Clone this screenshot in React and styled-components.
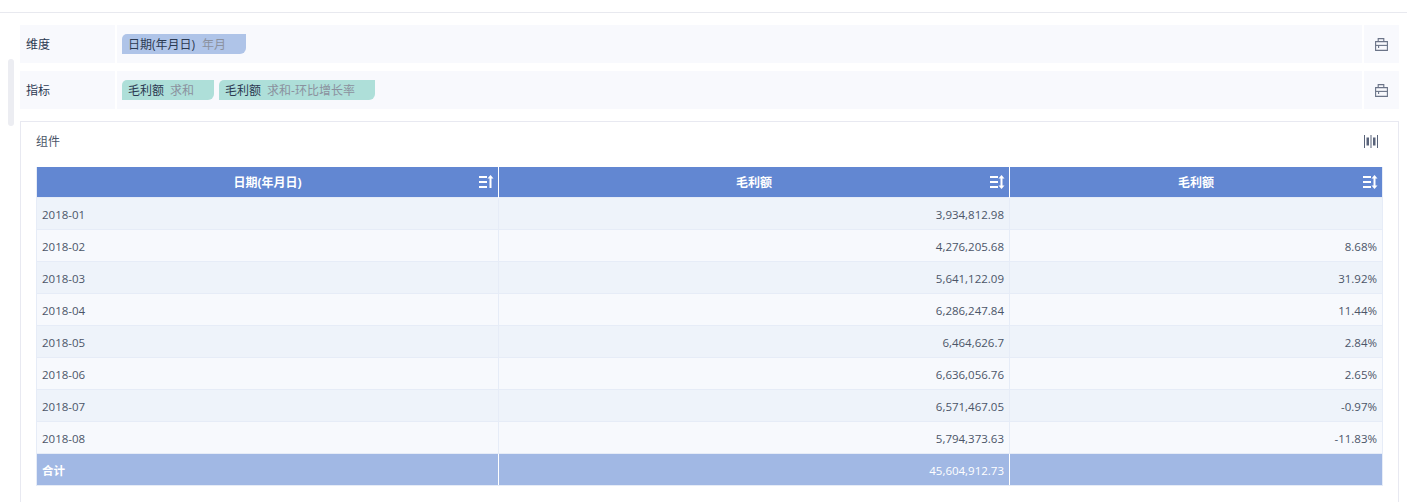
import React from 'react'
import styled, { createGlobalStyle } from 'styled-components'

const GlobalStyle = createGlobalStyle`
  html, body {
    margin: 0;
    height: 100%;
    overflow: hidden;
    background: #fff;
    font-family: "Open Sans", "Noto Sans CJK SC", sans-serif;
    font-size: 12px;
  }
`

const TopBar = styled.div`
  height: 12px;
  border-bottom: 1px solid #e8e9ef;
`
const Content = styled.div`
  padding: 12px 8px 0 20px;
`
const ScrollThumb = styled.div`
  position: absolute;
  left: 8px;
  top: 59px;
  width: 6px;
  height: 67px;
  border-radius: 3px;
  background: #ecedf2;
`
const FieldRow = styled.div`
  display: grid;
  grid-template-columns: 95px 1fr 35px;
  column-gap: 2px;
  height: 38px;
  margin-bottom: 8px;
`
const FieldLabel = styled.div`
  display: flex;
  align-items: center;
  padding-left: 6px;
  background: #f8f9fd;
  color: #2c3a52;
`
const FieldBody = styled.div`
  display: flex;
  align-items: center;
  gap: 5px;
  padding-left: 5px;
  background: #f8f9fd;
`
const FieldTool = styled.div`
  display: flex;
  align-items: center;
  justify-content: center;
  background: #f8f9fd;
`
const Chip = styled.div`
  display: flex;
  align-items: center;
  gap: ${p => p.$gap || 6}px;
  height: 20px;
  padding-left: 6px;
  width: ${p => p.$width}px;
  box-sizing: border-box;
  white-space: nowrap;
  border-radius: 5px 0 6px 0;
  background: ${p => p.$color};
  color: #2c3a52;
`
const ChipSub = styled.span`
  color: #8b919e;
`
const Panel = styled.div`
  margin-top: 12px;
  height: 400px;
  box-sizing: border-box;
  border: 1px solid #e8e9f1;
  padding: 0 15px;
`
const PanelHead = styled.div`
  display: flex;
  align-items: center;
  justify-content: space-between;
  height: 38px;
  margin-bottom: 7px;
  color: #4b5568;
  padding-right: 5px;
`
const Table = styled.div`
  border: 1px solid #e6ecf7;
  border-top: 0;
`
const Row = styled.div`
  display: grid;
  grid-template-columns: 462px 511px 1fr;
  height: ${p => p.$height}px;
  box-sizing: border-box;
  background: ${p => p.$bg};
  border-bottom: ${p => (p.$line ? '1px solid #e6ecf7' : '0')};
`
const Cell = styled.div`
  display: flex;
  align-items: center;
  justify-content: ${p => (p.$right ? 'flex-end' : 'flex-start')};
  padding: 1px 5px 0;
  color: #4b5568;
  font-size: 11.5px;
  border-right: 1px solid #e6ecf7;
  &:last-child {
    border-right: 0;
  }
`
const HeadCell = styled.div`
  position: relative;
  display: flex;
  align-items: center;
  justify-content: center;
  padding-bottom: 2px;
  font-weight: 700;
  color: #fff;
  border-right: 1px solid #fff;
  &:last-child {
    border-right: 0;
  }
`
const HeadRow = styled(Row)`
  box-shadow: inset 0 -1px 0 #e6ecf7;
`
const SortSlot = styled.span`
  position: absolute;
  right: 4px;
  top: 8px;
  display: flex;
`
const TotalCell = styled(Cell)`
  color: #fff;
  font-weight: ${p => (p.$cjk ? 700 : 400)};
  border-right-color: #fff;
`

const ToolIcon = () => (
  <svg width='13' height='13' viewBox='0 0 13 13' fill='none' stroke='#6b7488' strokeWidth='1.1'>
    <path d='M.6 3.6h11.8v8.8H.6z' />
    <path d='M3.2 3.6V.6h5.6v3' />
    <path d='M.6 7.4h11.8' />
    <path d='M3.6 7.4v2.6' />
  </svg>
)

const BarsIcon = () => (
  <svg width='14' height='13' viewBox='0 0 14 13' fill='#59637a'>
    <rect x='0' y='0' width='1' height='13' />
    <rect x='2.5' y='2.5' width='2.5' height='8' />
    <rect x='6.5' y='0' width='1' height='13' />
    <rect x='9' y='2.5' width='2.5' height='8' />
    <rect x='13' y='0' width='1' height='13' />
  </svg>
)

// lines with an arrow, one way for the sorted column and both ways for the others
const SortIcon = ({ both }) => (
  <svg width='15' height='14' viewBox='0 0 15 14' fill='#fff'>
    <rect x='0' y='1' width='8' height='2' />
    <rect x='0' y='6' width='8' height='2' />
    <rect x='0' y='11' width='8' height='2' />
    <rect x='10.5' y='2' width='2' height={both ? 10 : 11} />
    <path d='M11.5 0l3 3.5h-6z' />
    {both && <path d='M11.5 14l3-3.5h-6z' />}
  </svg>
)

const rows = [
  ['2018-01', '3,934,812.98', ''],
  ['2018-02', '4,276,205.68', '8.68%'],
  ['2018-03', '5,641,122.09', '31.92%'],
  ['2018-04', '6,286,247.84', '11.44%'],
  ['2018-05', '6,464,626.7', '2.84%'],
  ['2018-06', '6,636,056.76', '2.65%'],
  ['2018-07', '6,571,467.05', '-0.97%'],
  ['2018-08', '5,794,373.63', '-11.83%']
]

export default function App () {
  return (
    <>
      <GlobalStyle />
      <TopBar />
      <ScrollThumb />
      <Content>
        <FieldRow>
          <FieldLabel>维度</FieldLabel>
          <FieldBody>
            <Chip $width={124} $gap={7} $color='#afc4e8'>日期(年月日)<ChipSub>年月</ChipSub></Chip>
          </FieldBody>
          <FieldTool><ToolIcon /></FieldTool>
        </FieldRow>
        <FieldRow>
          <FieldLabel>指标</FieldLabel>
          <FieldBody>
            <Chip $width={92} $color='#aedfd9'>毛利额<ChipSub>求和</ChipSub></Chip>
            <Chip $width={156} $color='#aedfd9'>毛利额<ChipSub>求和-环比增长率</ChipSub></Chip>
          </FieldBody>
          <FieldTool><ToolIcon /></FieldTool>
        </FieldRow>
        <Panel>
          <PanelHead>组件<BarsIcon /></PanelHead>
          <Table>
            <HeadRow $height={31} $bg='#6287d2'>
              <HeadCell>日期(年月日)<SortSlot><SortIcon /></SortSlot></HeadCell>
              <HeadCell>毛利额<SortSlot><SortIcon both /></SortSlot></HeadCell>
              <HeadCell>毛利额<SortSlot><SortIcon both /></SortSlot></HeadCell>
            </HeadRow>
            {rows.map((r, i) => (
              <Row key={r[0]} $height={32} $line $bg={i % 2 === 0 ? '#eef3fa' : '#f7f9fd'}>
                <Cell>{r[0]}</Cell>
                <Cell $right>{r[1]}</Cell>
                <Cell $right>{r[2]}</Cell>
              </Row>
            ))}
            <Row $height={31} $bg='#a1b8e4'>
              <TotalCell $cjk>合计</TotalCell>
              <TotalCell $right>45,604,912.73</TotalCell>
              <TotalCell $right />
            </Row>
          </Table>
        </Panel>
      </Content>
    </>
  )
}
